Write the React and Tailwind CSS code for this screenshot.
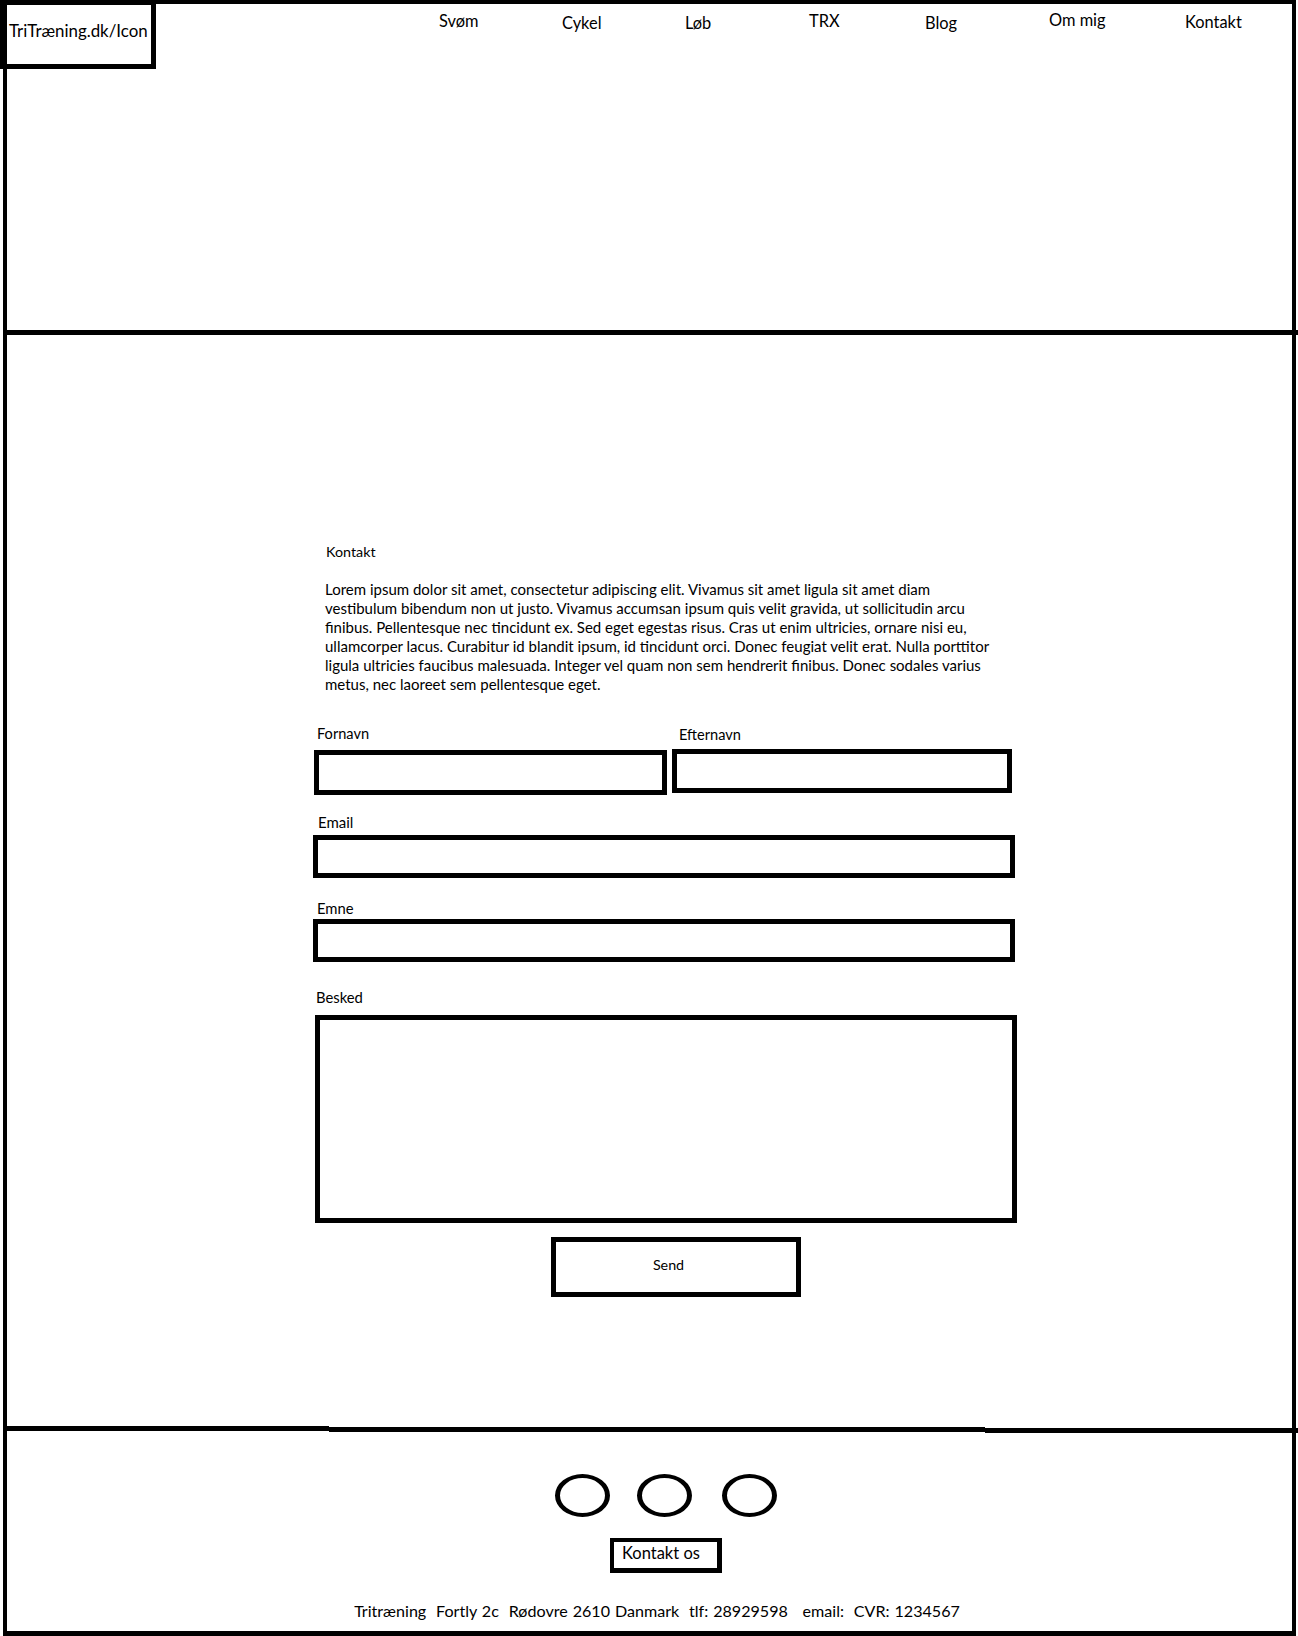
import React from "react";

const navItems = [
  { label: "Svøm", w: "w-[123px]", mt: "mt-[7px]" },
  { label: "Cykel", w: "w-[123px]", mt: "mt-[9px]" },
  { label: "Løb", w: "w-[124px]", mt: "mt-[9px]" },
  { label: "TRX", w: "w-[116px]", mt: "mt-[7px]" },
  { label: "Blog", w: "w-[124px]", mt: "mt-[9px]" },
  { label: "Om mig", w: "w-[136px]", mt: "mt-[6px]" },
  { label: "Kontakt", w: "w-[100px]", mt: "mt-[8px]" },
];

const lines = [
  "Lorem ipsum dolor sit amet, consectetur adipiscing elit. Vivamus sit amet ligula sit amet diam",
  "vestibulum bibendum non ut justo. Vivamus accumsan ipsum quis velit gravida, ut sollicitudin arcu",
  "finibus. Pellentesque nec tincidunt ex. Sed eget egestas risus. Cras ut enim ultricies, ornare nisi eu,",
  "ullamcorper lacus. Curabitur id blandit ipsum, id tincidunt orci. Donec feugiat velit erat. Nulla porttitor",
  "ligula ultricies faucibus malesuada. Integer vel quam non sem hendrerit finibus. Donec sodales varius",
  "metus, nec laoreet sem pellentesque eget.",
];

export default function App() {
  return (
    <div className="w-[1298px] h-[1636px] bg-white text-black font-['Lato',_'Noto_Sans',_sans-serif] overflow-hidden">
      <div className="ml-[3px] w-[1293px] h-[1636px] border-l-4 border-r-4 border-t-4 border-b-[5px] border-black flex flex-col">
        {/* Header */}
        <header className="h-[331px] border-b-[5px] border-black flex items-start shrink-0 -mr-[6px]">
          <div className="-ml-[7px] -mt-[4px] w-[156px] h-[69px] border-[5px] border-l-[3px] border-black shrink-0">
            <div className="pl-[6px] pt-[16px] text-[16.9px] leading-[20px] whitespace-nowrap">TriTræning.dk/Icon</div>
          </div>
          <nav className="ml-[283px] flex items-start">
            {navItems.map((n) => (
              <div key={n.label} className={`${n.w} ${n.mt} text-[16.4px] leading-[20px] whitespace-nowrap`}>
                {n.label}
              </div>
            ))}
          </nav>
        </header>

        {/* Main */}
        <main className="h-[1091px] shrink-0 pl-[306px] flex flex-col items-start">
          <h1 className="mt-[207px] ml-[13px] text-[14.3px] leading-[20px] font-normal">Kontakt</h1>
          <div className="mt-[18px] ml-[12px] text-[15px] leading-[19px]">
            {lines.map((l, i) => (
              <div key={i} className="whitespace-nowrap">{l}</div>
            ))}
          </div>

          <div className="mt-[30px] flex items-start">
            <div className="ml-[1px] w-[353px] flex flex-col">
              <label className="ml-[3px] text-[14.6px] leading-[20px]">Fornavn</label>
              <div className="mt-[6px] h-[45px] border-[5px] border-black"></div>
            </div>
            <div className="ml-[5px] w-[340px] flex flex-col">
              <label className="mt-[1px] ml-[7px] text-[14.6px] leading-[20px]">Efternavn</label>
              <div className="mt-[4px] h-[44px] border-[5px] border-black"></div>
            </div>
          </div>

          <label className="mt-[17px] ml-[5px] text-[15px] leading-[20px]">Email</label>
          <div className="mt-[3px] w-[702px] h-[43px] border-[5px] border-black"></div>

          <label className="mt-[20px] ml-[4px] text-[14.8px] leading-[20px]">Emne</label>
          <div className="mt-[1px] w-[702px] h-[43px] border-[5px] border-black"></div>

          <label className="mt-[25px] ml-[3px] text-[14.8px] leading-[20px]">Besked</label>
          <div className="mt-[8px] ml-[2px] w-[702px] h-[208px] border-[5px] border-black"></div>

          <button className="mt-[14px] ml-[238px] w-[250px] h-[60px] border-[5px] border-black flex items-center justify-center pr-[15px] pb-[4px] text-[14.3px] leading-[20px] bg-white">
            Send
          </button>
        </main>

        {/* Footer */}
        <footer className="h-[205px] shrink-0 flex flex-col items-start">
          <div className="flex items-start w-[1291px] h-[7px]">
            <div className="w-[322px] h-[5px] bg-black"></div>
            <div className="mt-[1px] w-[656px] h-[5px] bg-black"></div>
            <div className="mt-[2px] flex-1 h-[5px] bg-black"></div>
          </div>
          <div className="mt-[41px] ml-[548px] flex items-start">
            <div className="w-[55px] h-[43px] rounded-[50%] border-[5px] border-y-4 border-black"></div>
            <div className="ml-[27px] w-[55px] h-[43px] rounded-[50%] border-[5px] border-y-4 border-black"></div>
            <div className="ml-[30px] w-[55px] h-[43px] rounded-[50%] border-[5px] border-y-4 border-black"></div>
          </div>
          <div className="mt-[21px] ml-[603px] w-[112px] h-[35px] border-4 border-r-[5px] border-b-[5px] border-black">
            <div className="pl-[8px] pt-[1px] text-[16.5px] leading-[20px] whitespace-nowrap">Kontakt os</div>
          </div>
          <div className="mt-[28px] ml-[150px] w-[1000px] text-center text-[16.1px] leading-[20px] whitespace-pre [word-spacing:0.8px]">
            {"Tritræning  Fortly 2c  Rødovre 2610 Danmark  tlf: 28929598   email:  CVR: 1234567"}
          </div>
        </footer>
      </div>
    </div>
  );
}
